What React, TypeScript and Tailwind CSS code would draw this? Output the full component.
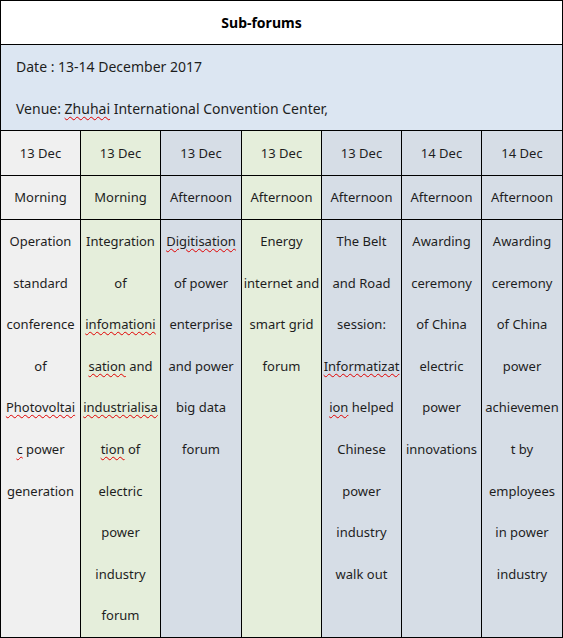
import React from "react";

type Seg = { t: string; sq?: boolean };
type Line = Seg[];

const L = (...segs: (string | Seg)[]): Line =>
  segs.map((s) => (typeof s === "string" ? { t: s } : s));
const S = (t: string): Seg => ({ t, sq: true });

const cols: { date: string; period: string; bg: string; lines: Line[] }[] = [
  {
    date: "13 Dec",
    period: "Morning",
    bg: "bg-[#f0f0f0]",
    lines: [
      L("Operation"),
      L("standard"),
      L("conference"),
      L("of"),
      L(S("Photovoltai")),
      L(S("c"), " power"),
      L("generation"),
    ],
  },
  {
    date: "13 Dec",
    period: "Morning",
    bg: "bg-[#e5eedb]",
    lines: [
      L("Integration"),
      L("of"),
      L(S("infomationi")),
      L(S("sation"), " and"),
      L(S("industrialisa")),
      L(S("tion"), " of"),
      L("electric"),
      L("power"),
      L("industry"),
      L("forum"),
    ],
  },
  {
    date: "13 Dec",
    period: "Afternoon",
    bg: "bg-[#d6dde6]",
    lines: [
      L(S("Digitisation")),
      L("of power"),
      L("enterprise"),
      L("and power"),
      L("big data"),
      L("forum"),
    ],
  },
  {
    date: "13 Dec",
    period: "Afternoon",
    bg: "bg-[#e5eedb]",
    lines: [L("Energy"), L("internet and"), L("smart grid"), L("forum")],
  },
  {
    date: "13 Dec",
    period: "Afternoon",
    bg: "bg-[#d6dde6]",
    lines: [
      L("The Belt"),
      L("and Road"),
      L("session:"),
      L(S("Informatizat")),
      L(S("ion"), " helped"),
      L("Chinese"),
      L("power"),
      L("industry"),
      L("walk out"),
    ],
  },
  {
    date: "14 Dec",
    period: "Afternoon",
    bg: "bg-[#d6dde6]",
    lines: [
      L("Awarding"),
      L("ceremony"),
      L("of China"),
      L("electric"),
      L("power"),
      L("innovations"),
    ],
  },
  {
    date: "14 Dec",
    period: "Afternoon",
    bg: "bg-[#d6dde6]",
    lines: [
      L("Awarding"),
      L("ceremony"),
      L("of China"),
      L("power"),
      L("achievemen"),
      L("t by"),
      L("employees"),
      L("in power"),
      L("industry"),
    ],
  },
];

function Text({ line }: { line: Line }) {
  return (
    <div className="h-[41.6px] leading-[41.6px] whitespace-nowrap">
      {line.map((s, i) =>
        s.sq ? (
          <span
            key={i}
            className="underline decoration-wavy decoration-[#e00000] decoration-1 underline-offset-2"
          >
            {s.t}
          </span>
        ) : (
          <span key={i} className="whitespace-pre">
            {s.t}
          </span>
        )
      )}
    </div>
  );
}

export default function App() {
  return (
    <div
      className="w-[563px] h-[638px] bg-black p-px text-[13px] text-[#1e1e1e]"
      style={{ fontFamily: '"Noto Sans", "Open Sans", sans-serif' }}
    >
      <div className="grid h-full grid-cols-[79px_79px_80px_79px_79px_79px_80px] grid-rows-[43px_85px_44px_43px_417px] gap-px">
        <div className="col-span-7 bg-white flex items-center justify-center pr-[40px] font-bold text-[14px] text-black">
          Sub-forums
        </div>
        <div className="col-span-7 bg-[#dce6f2] px-[15px] pt-px text-[14px]">
          <div className="h-[42px] leading-[42px]">Date : 13-14 December 2017</div>
          <div className="h-[42px] leading-[42px]">
            Venue:{" "}
            <span className="underline decoration-wavy decoration-[#e00000] decoration-1 underline-offset-2">
              Zhuhai
            </span>{" "}
            International Convention Center,
          </div>
        </div>
        {cols.map((c, i) => (
          <div key={"d" + i} className={`${c.bg} flex items-center justify-center pt-px`}>
            {c.date}
          </div>
        ))}
        {cols.map((c, i) => (
          <div key={"p" + i} className={`${c.bg} flex items-center justify-center pt-px`}>
            {c.period}
          </div>
        ))}
        {cols.map((c, i) => (
          <div key={"b" + i} className={`${c.bg} flex flex-col items-center overflow-hidden pt-px`}>
            {c.lines.map((l, j) => (
              <Text key={j} line={l} />
            ))}
          </div>
        ))}
      </div>
    </div>
  );
}
